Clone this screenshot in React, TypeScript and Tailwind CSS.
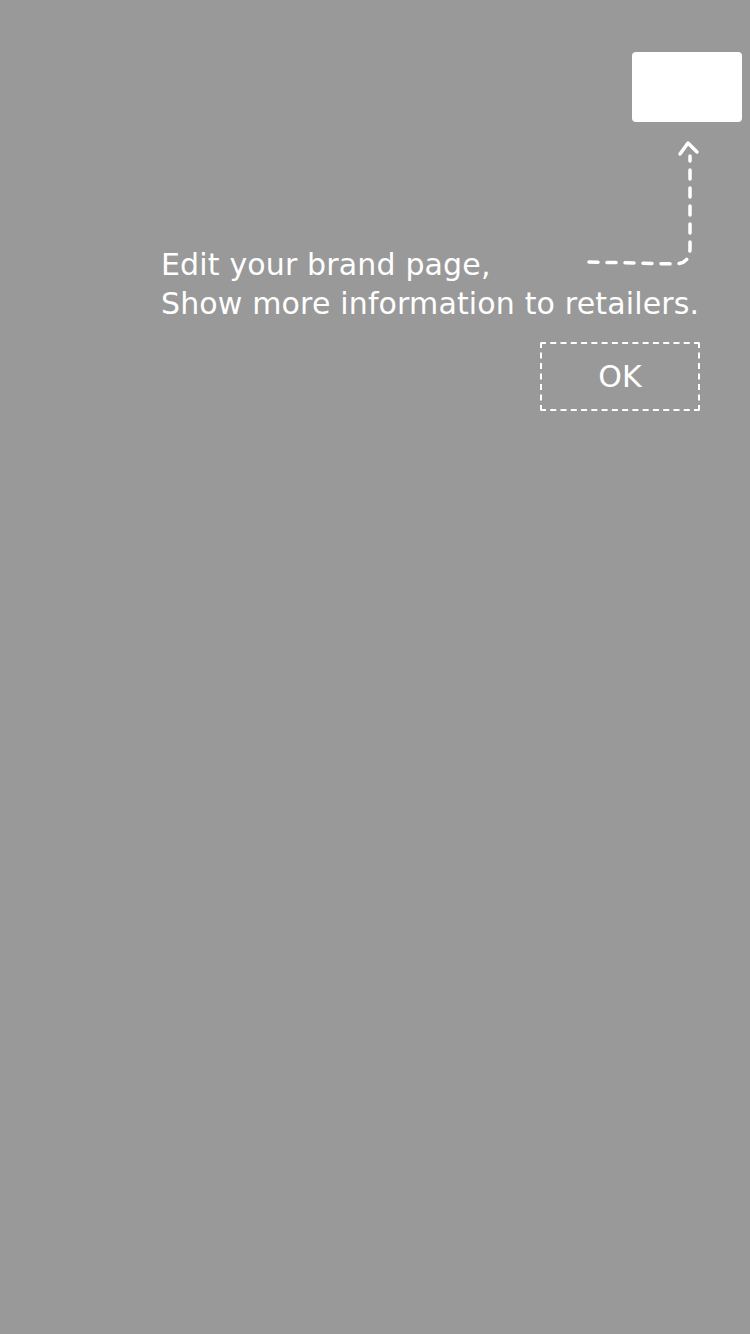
export default function App() {
  return (
    <div
      className="relative w-[750px] h-[1334px] bg-[#999999] flex flex-col text-white"
      style={{ fontFamily: '"DejaVu Sans", Verdana, sans-serif' }}
    >
      <div className="self-end mt-[52px] mr-[8px] w-[110px] h-[70px] bg-white rounded-[4px]" />
      <svg
        className="absolute left-0 top-0"
        width="750"
        height="300"
        viewBox="0 0 750 300"
        fill="none"
      >
        <path
          d="M589 262 L676 264 Q690 263 690 248 L690 156"
          stroke="#ffffff"
          strokeWidth="3.5"
          strokeLinecap="round"
          strokeDasharray="9 9"
        />
        <path
          d="M680 154 L688 143 L697 152"
          stroke="#ffffff"
          strokeWidth="3.5"
          strokeLinecap="round"
          strokeLinejoin="round"
        />
      </svg>
      <div className="mt-[123px] ml-[161px] text-[30px] leading-[39px] tracking-[0.15px]">
        <div>Edit your brand page,</div>
        <div>Show more information to retailers.</div>
      </div>
      <div className="self-end mt-[19px] mr-[50px] w-[160px] h-[69px] border-2 border-dashed border-white rounded-[2px] flex items-center justify-center text-[30px]">
        OK
      </div>
    </div>
  );
}
